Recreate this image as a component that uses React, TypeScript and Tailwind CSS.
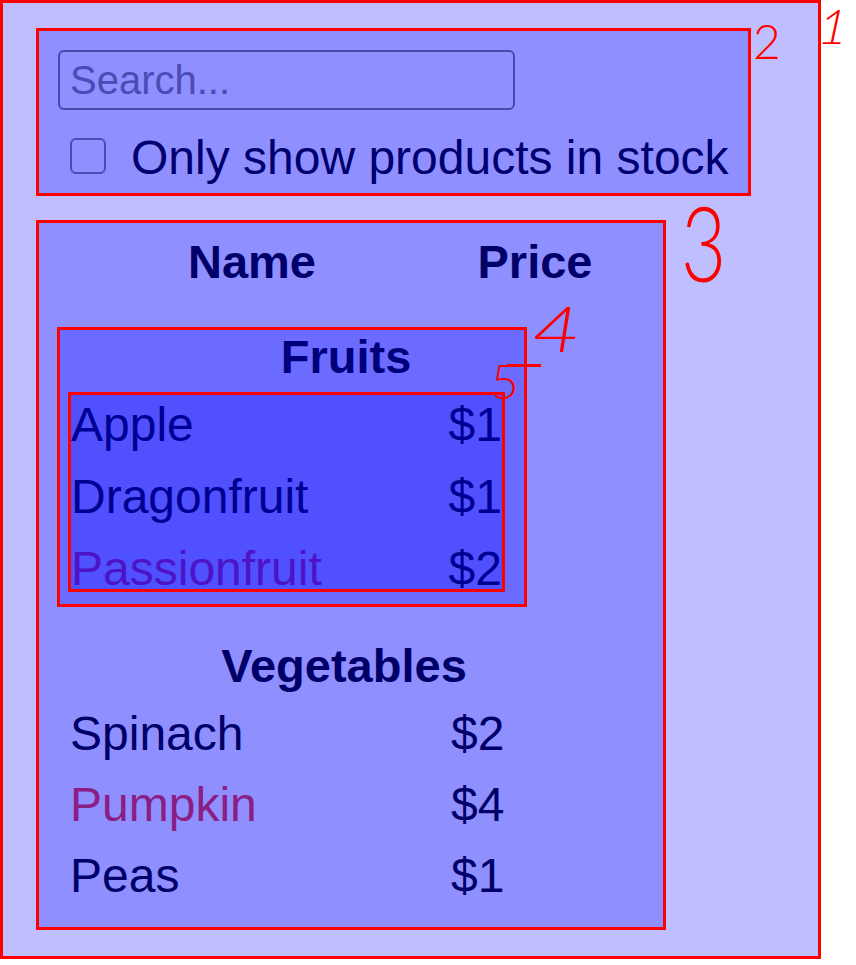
import React from "react";

const font = { fontFamily: '"Liberation Sans", Arial, sans-serif' };
const hand = { fontFamily: 'Lato, "DejaVu Sans", sans-serif' };

function Row({ name, price, nameCls, priceCls }: { name: string; price: string; nameCls: string; priceCls: string }) {
  return (
    <div className="flex h-[48px] text-[48px] leading-none">
      <div className={"w-[381px] whitespace-nowrap " + nameCls}>{name}</div>
      <div className={"whitespace-nowrap " + priceCls}>{price}</div>
    </div>
  );
}

export default function App() {
  return (
    <div className="relative w-[856px] h-[965px] bg-white" style={font}>
      {/* Box 1 */}
      <div className="w-[821px] h-[959px] border-[3px] border-[#ff0000] bg-[#bfbfff] pt-[25px] pl-[33px]">
        {/* Box 2 */}
        <div className="w-[715px] h-[168px] border-[3px] border-[#ff0000] bg-[#8f8fff] pl-[19px] pt-[19px]">
          <input
            type="text"
            placeholder="Search..."
            className="block w-[457px] h-[60px] border-2 border-[#4848aa] rounded-[6px] bg-transparent pl-[10px] text-[40px] text-[#00006e] placeholder:text-[#4b4bb6] outline-none"
            style={font}
          />
          <div className="flex items-start mt-[28px]">
            <input
              type="checkbox"
              className="appearance-none ml-[12px] w-[36px] h-[36px] border-2 border-[#4c4cb2] rounded-[6px] bg-transparent"
            />
            <span className="ml-[25px] mt-[-4px] text-[48px] leading-none text-[#00006e] whitespace-nowrap">
              Only show products in stock
            </span>
          </div>
        </div>

        {/* Box 3 */}
        <div className="mt-[24px] w-[630px] h-[710px] border-[3px] border-[#ff0000] bg-[#8f8fff] pt-[15px]">
          <div className="flex text-[47px] font-bold leading-none text-[#000068]">
            <div className="ml-[32px] w-[362px] text-center">Name</div>
            <div className="ml-[20px] w-[164px] text-center">Price</div>
          </div>

          {/* Box 4 */}
          <div className="mt-[42px] ml-[18px] w-[470px] h-[280px] border-[3px] border-[#ff0000] bg-[#6b6bff] pt-[3px]">
            <div className="ml-[8px] w-[556px] text-center text-[47px] font-bold leading-none text-[#00007a]">Fruits</div>
            {/* Box 5 */}
            <div className="mt-[12px] ml-[8px] w-[437px] h-[200px] border-[3px] border-[#ff0000] bg-[#5050ff] pt-[6px] flex flex-col gap-[24px]">
              <Row name="Apple" price="$1" nameCls="text-[#000092]" priceCls="text-[#000092]" />
              <Row name="Dragonfruit" price="$1" nameCls="text-[#000092]" priceCls="text-[#000092]" />
              <Row name="Passionfruit" price="$2" nameCls="text-[#4c14c6]" priceCls="text-[#000092]" />
            </div>
          </div>

          <div className="mt-[35px] ml-[27px] w-[556px] text-center text-[47px] font-bold leading-none text-[#000068]">Vegetables</div>
          <div className="mt-[21px] ml-[31px] flex flex-col gap-[23px]">
            <Row name="Spinach" price="$2" nameCls="text-[#000068]" priceCls="text-[#000068]" />
            <Row name="Pumpkin" price="$4" nameCls="text-[#8a1e84]" priceCls="text-[#000068]" />
            <Row name="Peas" price="$1" nameCls="text-[#000068]" priceCls="text-[#000068]" />
          </div>
        </div>
      </div>

      {/* Handwritten annotations */}
      <span className="absolute left-[820px] top-[2px] inline-block text-[48px] leading-none font-light text-[#ff0000] -skew-x-12" style={hand}>1</span>
      <span className="absolute left-[753px] top-[17px] text-[48px] leading-none font-light text-[#ff0000]" style={hand}>2</span>
      <span className="absolute left-[681px] top-[190px] text-[104px] leading-none font-light text-[#ff0000] scale-x-[0.75] origin-left" style={hand}>3</span>
      <span className="absolute left-[532px] top-[296px] text-[64px] leading-none italic font-light text-[#ff0000] scale-x-[1.3] origin-left" style={hand}>4</span>
      <span className="absolute left-[491px] top-[357px] text-[48px] leading-none font-light text-[#ff0000]" style={hand}>5</span>
      <div className="absolute left-[507px] top-[364px] w-[34px] h-[3px] bg-[#ff0000]" />
    </div>
  );
}
